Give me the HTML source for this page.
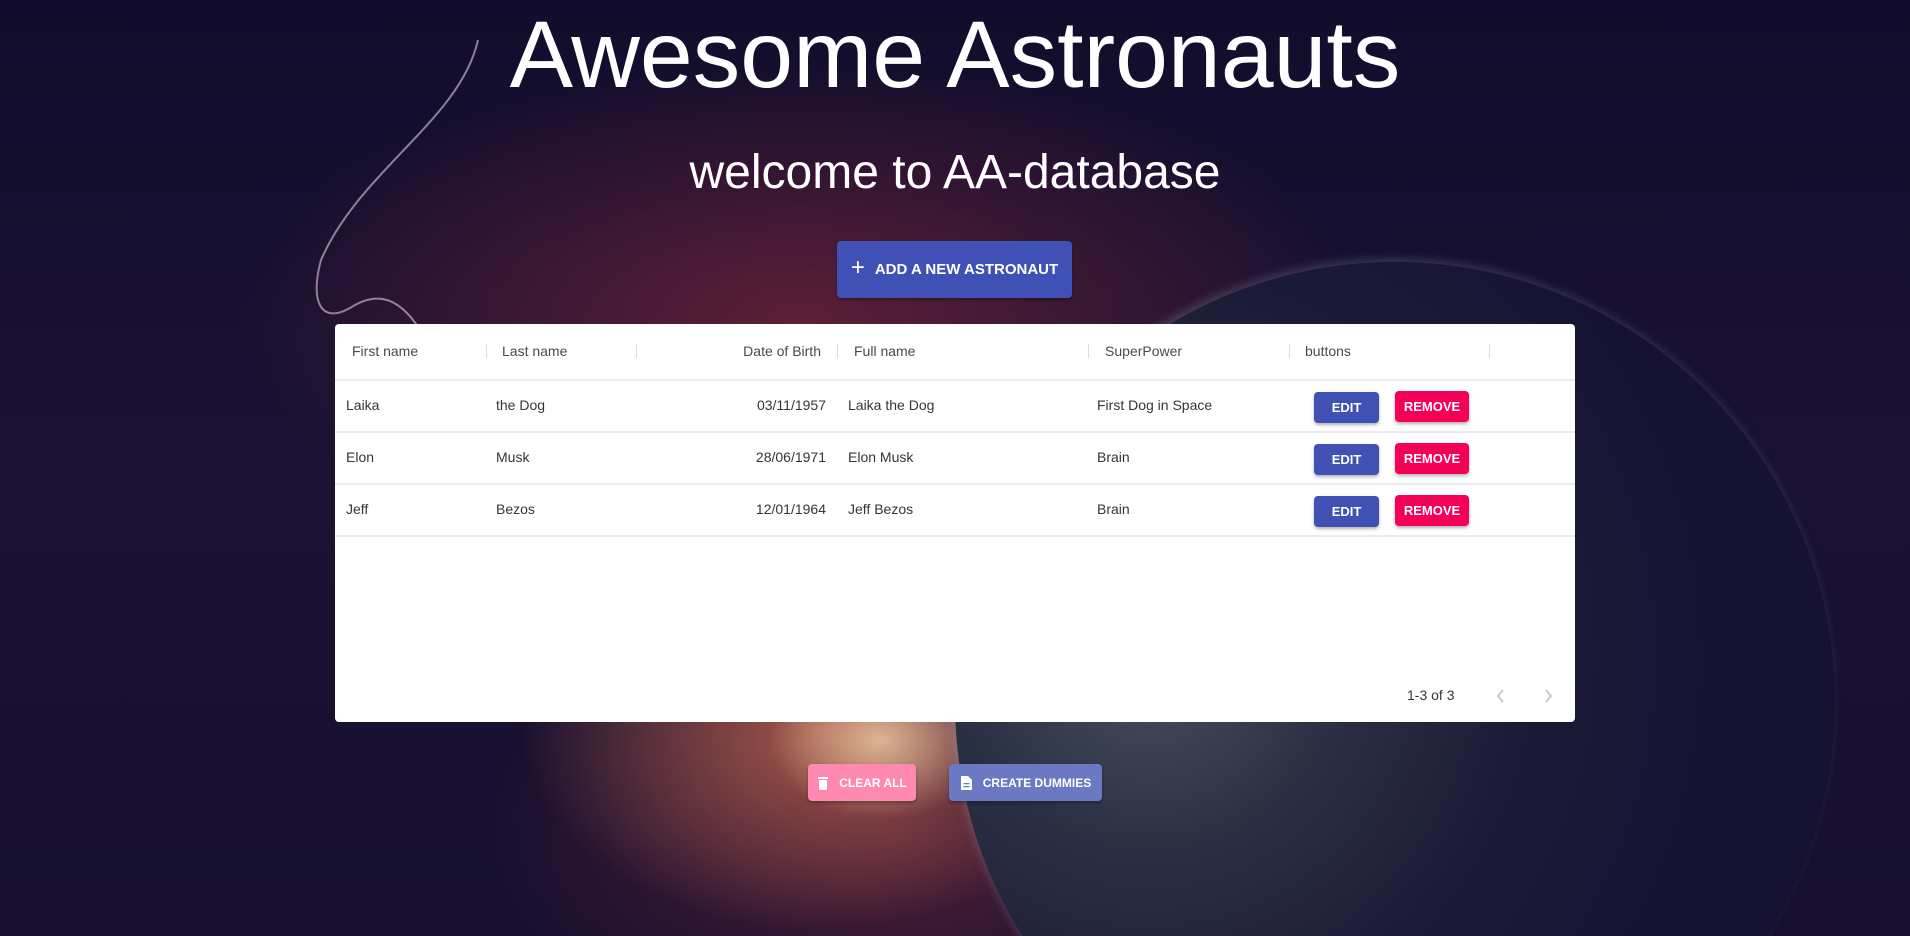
<!DOCTYPE html>
<html><head><meta charset="utf-8"><style>
*{box-sizing:border-box;margin:0;padding:0}
html,body{width:1910px;height:936px;overflow:hidden}
body{font-family:"Liberation Sans",sans-serif;position:relative;
background:
radial-gradient(ellipse 110px 80px at 880px 740px, rgba(255,225,180,0.7), rgba(255,200,150,0) 100%),
radial-gradient(ellipse 300px 200px at 820px 730px, rgba(220,120,85,0.65), rgba(200,80,70,0) 100%),
radial-gradient(ellipse 560px 260px at 800px 320px, rgba(140,40,60,0.6), rgba(120,30,60,0) 100%),
radial-gradient(ellipse 420px 240px at 900px 840px, rgba(130,45,60,0.5), rgba(100,30,60,0) 100%),
linear-gradient(180deg,#120d2c 0%,#1a1233 50%,#160f2e 100%);}
.wrap{position:absolute;left:0;top:0;width:1910px;height:936px;overflow:hidden}
.planet{position:absolute;left:955px;top:262px;width:880px;height:880px;border-radius:50%;
background:radial-gradient(circle at 22% 45%, #4a505e 0%, #2c3044 22%, #1b1b36 45%, #151232 70%);
box-shadow:-3px -3px 10px rgba(170,180,210,0.25)}
h1{position:absolute;top:0;left:0;width:1910px;text-align:center;color:#fff;font-weight:400;font-size:95px;line-height:110px}
h2{position:absolute;top:145px;left:0;width:1910px;text-align:center;color:#fff;font-weight:400;font-size:48px;line-height:56px}
.btn{position:absolute;display:flex;align-items:center;justify-content:center;color:#fff;font-weight:bold;border-radius:4px;box-shadow:0 2px 3px rgba(0,0,0,.3)}
.add{left:837px;top:241px;width:235px;height:57px;background:#3f51b5;font-size:15px}
.card{position:absolute;left:335px;top:324px;width:1240px;height:398px;background:#fff;border-radius:4px}
.t{position:absolute;font-size:14px;color:rgba(0,0,0,.8)}
.h{color:rgba(0,0,0,.72)}
.sep{position:absolute;top:344px;width:1px;height:14px;background:#ddd}
.line{position:absolute;left:335px;width:1240px;height:2px;background:#eceaea}
.edit{width:65px;height:31px;background:#3f51b5;font-size:13px}
.rem{width:74px;height:31px;background:#f50057;font-size:13px}
</style></head><body><div class="wrap">
<div class="planet"></div>
<svg style="position:absolute;left:300px;top:40px" width="200" height="290"><path d="M178 0 C160 80,60 130,21 220 C10 260,20 285,50 268 C70 255,95 250,120 290" fill="none" stroke="rgba(230,200,220,0.6)" stroke-width="2"/></svg>
<h1>Awesome Astronauts</h1>
<h2>welcome to AA-database</h2>
<div class="btn add"><span style="font-size:24px;font-weight:300;margin-right:10px;margin-top:-3px">+</span>ADD A NEW ASTRONAUT</div>
<div class="card"></div>
<div class="line" style="top:379px"></div>
<div class="line" style="top:431px"></div>
<div class="line" style="top:483px"></div>
<div class="line" style="top:535px"></div>
<div class="t h" style="left:352px;top:343px">First name</div>
<div class="t h" style="left:502px;top:343px">Last name</div>
<div class="t h" style="left:700px;top:343px;width:121px;text-align:right">Date of Birth</div>
<div class="t h" style="left:854px;top:343px">Full name</div>
<div class="t h" style="left:1105px;top:343px">SuperPower</div>
<div class="t h" style="left:1305px;top:343px">buttons</div>
<div class="sep" style="left:486px"></div><div class="sep" style="left:636px"></div><div class="sep" style="left:837px"></div><div class="sep" style="left:1088px"></div><div class="sep" style="left:1289px"></div><div class="sep" style="left:1489px"></div>

<div class="t" style="left:346px;top:397px">Laika</div>
<div class="t" style="left:496px;top:397px">the Dog</div>
<div class="t" style="left:700px;top:397px;width:126px;text-align:right">03/11/1957</div>
<div class="t" style="left:848px;top:397px">Laika the Dog</div>
<div class="t" style="left:1097px;top:397px">First Dog in Space</div>
<div class="btn edit" style="left:1314px;top:392px">EDIT</div>
<div class="btn rem" style="left:1395px;top:391px">REMOVE</div>

<div class="t" style="left:346px;top:449px">Elon</div>
<div class="t" style="left:496px;top:449px">Musk</div>
<div class="t" style="left:700px;top:449px;width:126px;text-align:right">28/06/1971</div>
<div class="t" style="left:848px;top:449px">Elon Musk</div>
<div class="t" style="left:1097px;top:449px">Brain</div>
<div class="btn edit" style="left:1314px;top:444px">EDIT</div>
<div class="btn rem" style="left:1395px;top:443px">REMOVE</div>

<div class="t" style="left:346px;top:501px">Jeff</div>
<div class="t" style="left:496px;top:501px">Bezos</div>
<div class="t" style="left:700px;top:501px;width:126px;text-align:right">12/01/1964</div>
<div class="t" style="left:848px;top:501px">Jeff Bezos</div>
<div class="t" style="left:1097px;top:501px">Brain</div>
<div class="btn edit" style="left:1314px;top:496px">EDIT</div>
<div class="btn rem" style="left:1395px;top:495px">REMOVE</div>

<div class="t" style="left:1407px;top:687px;color:rgba(0,0,0,.8)">1-3 of 3</div>
<svg style="position:absolute;left:1493px;top:687px" width="66" height="18"><path d="M10 3 L5 9 L10 15" fill="none" stroke="#bbb" stroke-width="1.5"/><path d="M53 3 L58 9 L53 15" fill="none" stroke="#bbb" stroke-width="1.5"/></svg>

<div class="btn" style="left:808px;top:764px;width:108px;height:37px;background:#ff89b0;font-size:12px"><svg width="12" height="14" style="margin-right:10px"><rect x="1" y="1" width="10" height="2" fill="#fff"/><rect x="2" y="4" width="8" height="10" rx="1" fill="#fff"/></svg>CLEAR ALL</div>
<div class="btn" style="left:949px;top:764px;width:153px;height:37px;background:#6a79c2;font-size:12px"><svg width="13" height="16" style="margin-right:10px"><path d="M1 1 H8 L12 5 V15 H1 Z" fill="#fff"/><rect x="3.5" y="8" width="6" height="1.3" fill="#6a79c2"/><rect x="3.5" y="11" width="6" height="1.3" fill="#6a79c2"/></svg>CREATE DUMMIES</div>
</div></body></html>
